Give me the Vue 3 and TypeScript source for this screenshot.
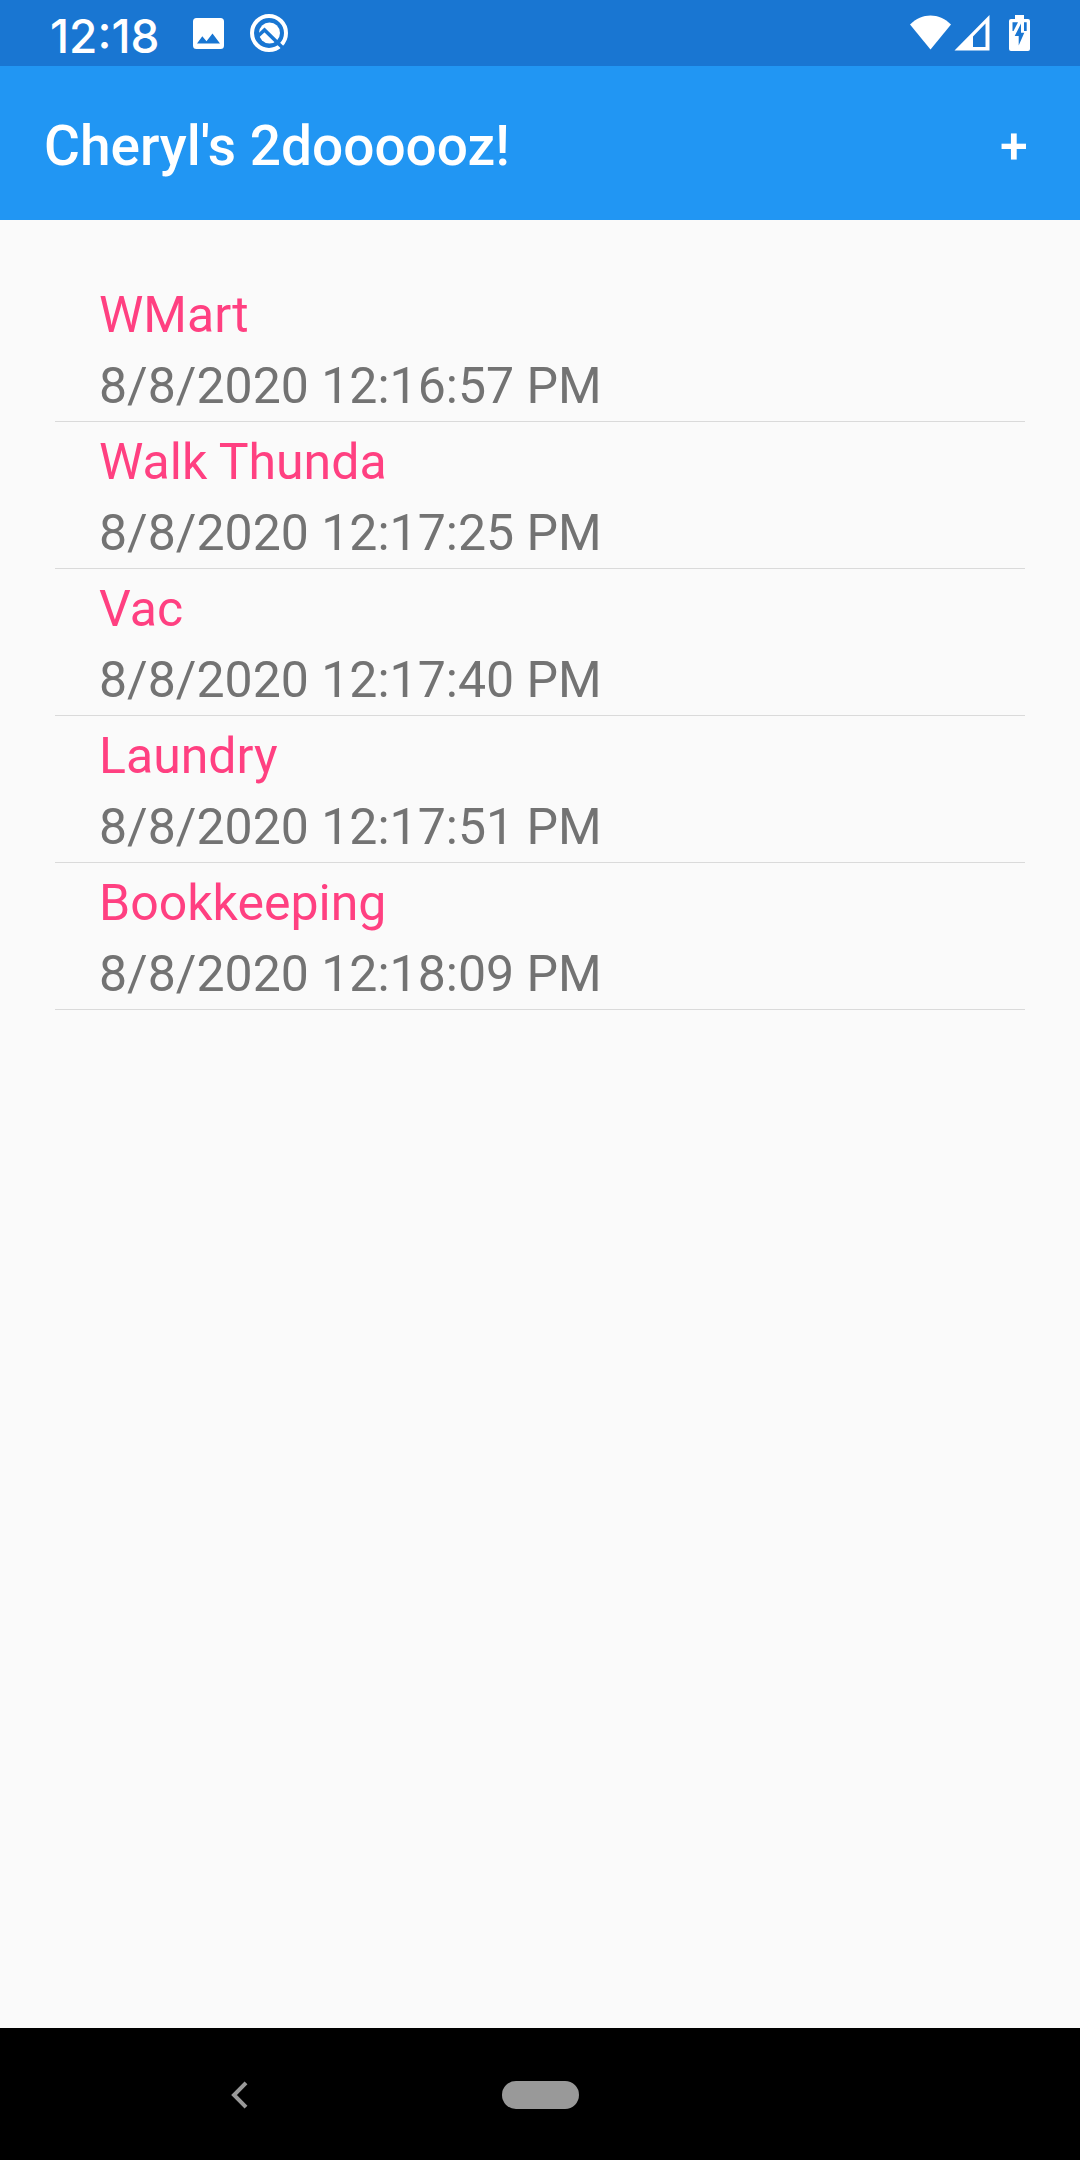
<script setup lang="ts">
interface Todo {
  id: number
  title: string
  due: string
}

const todos: Todo[] = [
  { id: 1, title: 'WMart', due: '8/8/2020 12:16:57 PM' },
  { id: 2, title: 'Walk Thunda', due: '8/8/2020 12:17:25 PM' },
  { id: 3, title: 'Vac', due: '8/8/2020 12:17:40 PM' },
  { id: 4, title: 'Laundry', due: '8/8/2020 12:17:51 PM' },
  { id: 5, title: 'Bookkeeping', due: '8/8/2020 12:18:09 PM' },
]
</script>

<template>
  <div class="screen">
    <div class="status-bar">
      <div class="status-group">
        <span class="clock">12:18</span>
        <svg class="icon-photo" viewBox="0 0 31 31" width="31" height="31" aria-hidden="true">
          <path
            fill="#fff"
            fill-rule="evenodd"
            d="M3.500 0h24a3.500 3.500 0 0 1 3.500 3.500v24a3.500 3.500 0 0 1-3.500 3.500h-24a3.500 3.500 0 0 1-3.500-3.500v-24a3.500 3.500 0 0 1 3.500-3.500zM4 25.500h23l-7.500-10-6 7.700-4.200-5z"
          />
        </svg>
        <svg class="icon-q" viewBox="0 0 38 38" width="38" height="38" aria-hidden="true">
          <circle cx="19" cy="19" r="17" fill="none" stroke="#fff" stroke-width="4" />
          <circle cx="19.500" cy="19" r="10.500" fill="#fff" />
          <path d="M7 23L14.500 16L33.500 34.500" fill="none" stroke="#1976d2" stroke-width="3.500" />
        </svg>
      </div>
      <div class="status-group">
        <svg viewBox="0 0 42 36" width="42" height="36" aria-hidden="true">
          <path d="M0 9.500C12-2.500 29-2.500 41 9.500L20.500 34.500z" fill="#fff" />
        </svg>
        <svg class="icon-signal" viewBox="0 0 36 36" width="36" height="36" aria-hidden="true">
          <path d="M0.500 35.500L35.500 0v35.500zM19 21.500V32h12.500V8.500z" fill="#fff" fill-rule="evenodd" />
        </svg>
        <svg class="icon-battery" viewBox="0 0 21 36" width="21" height="36" aria-hidden="true">
          <path d="M6 0h9v4h4a2 2 0 0 1 2 2v28a2 2 0 0 1-2 2H2a2 2 0 0 1-2-2V6a2 2 0 0 1 2-2h4z" fill="#fff" />
          <path d="M3.500 7.300h5.500L4.500 16H3.500zM15 7.300h2.700V16H15zM12 8.500v9.200h3.300L9.700 30.500V21H5.700z" fill="#1976d2" />
        </svg>
      </div>
    </div>

    <header class="app-bar">
      <h1>Cheryl's 2doooooz!</h1>
      <button type="button" class="add" aria-label="Add item">+</button>
    </header>

    <main>
      <ul class="todos">
        <li v-for="todo in todos" :key="todo.id">
          <p class="title">{{ todo.title }}</p>
          <p class="due">{{ todo.due }}</p>
        </li>
      </ul>
    </main>

    <nav class="nav-bar">
      <button type="button" class="back" aria-label="Back">
        <svg viewBox="0 0 17 28" width="17" height="28" aria-hidden="true">
          <path d="M15 1.800L3 14L15 26.200" fill="none" stroke="#999" stroke-width="4" />
        </svg>
      </button>
      <button type="button" class="home" aria-label="Home"></button>
    </nav>
  </div>
</template>

<style>
body {
  background: #fafafa;
}
</style>

<style scoped>
.screen {
  min-height: 100vh;
  display: flex;
  flex-direction: column;
  background: #fafafa;
  font-family: Roboto, sans-serif;
}

.screen svg {
  display: block;
}

button {
  border: 0;
  padding: 0;
  background: none;
  font-family: inherit;
}

.status-bar {
  height: 66px;
  padding: 0 50px;
  box-sizing: border-box;
  display: flex;
  align-items: center;
  justify-content: space-between;
  background: #1976d2;
}

.status-group {
  display: flex;
  align-items: center;
}

.clock {
  width: 107px;
  padding-top: 6px;
  color: #fff;
  font: 500 46px/60px Inter, sans-serif;
  white-space: nowrap;
}

.icon-photo {
  margin-left: 36px;
}

.icon-q {
  margin-left: 26px;
}

.icon-signal {
  margin-left: 2px;
}

.icon-battery {
  margin-left: 19px;
}

.app-bar {
  height: 154px;
  padding: 5px 44px 0;
  box-sizing: border-box;
  display: flex;
  align-items: center;
  justify-content: space-between;
  background: #2196f3;
  color: #fff;
}

h1 {
  margin: 0;
  font-size: 55px;
  line-height: 64px;
  font-weight: 500;
}

.add {
  width: 44px;
  height: 64px;
  color: #fff;
  font-size: 50px;
  line-height: 64px;
  font-weight: 500;
}

main {
  flex: 1;
  padding: 55px;
}

.todos {
  margin: 0;
  padding: 0;
  list-style: none;
}

li {
  padding: 5px 44px 0;
  box-shadow: inset 0 -1px #dadada;
}

p {
  margin: 0;
  font-size: 50px;
  line-height: 71px;
}

.title {
  color: #ff4081;
}

.due {
  color: #737373;
}

.nav-bar {
  height: 132px;
  padding-top: 1px;
  box-sizing: border-box;
  display: grid;
  grid-template-columns: 1fr 77px 1fr;
  align-items: center;
  background: #000;
}

.back {
  justify-self: center;
  display: flex;
  justify-content: center;
  width: 60px;
  height: 28px;
  margin-right: 22px;
}

.home {
  height: 28px;
  border-radius: 14px;
  background: #999;
}
</style>
